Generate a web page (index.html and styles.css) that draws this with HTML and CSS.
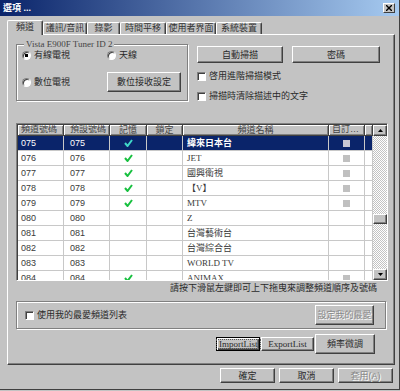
FILE: index.html
```html
<!DOCTYPE html>
<html lang="zh-Hant">
<head>
    <meta charset="UTF-8">
    <title>選項</title>
    <link rel="stylesheet" href="styles.css">
</head>
<body>
<div class="window">
    <div class="titlebar">
        <span>選項 ...</span>
        <span class="close"><svg width="6" height="6" viewBox="0 0 6 6"><path d="M0 0L6 6M6 0L0 6"/></svg></span>
    </div>

    <div class="tabs">
        <div class="tab active">頻道</div>
        <div class="tab">議訊/音訊</div>
        <div class="tab">錄影</div>
        <div class="tab">時間平移</div>
        <div class="tab">使用者界面</div>
        <div class="tab">系統裝置</div>
    </div>

    <div class="panel">
        <div class="top">
            <fieldset class="tuner">
                <legend>Vista E900F Tuner ID 2</legend>
                <div class="tuner-grid">
                    <label class="radio"><span class="dot checked"></span>有線電視</label>
                    <label class="radio"><span class="dot"></span>天線</label>
                    <label class="radio"><span class="dot"></span>數位電視</label>
                    <button class="btn digital">數位接收設定</button>
                </div>
            </fieldset>
            <div class="scan">
                <div class="scan-buttons">
                    <button class="btn auto">自動掃描</button>
                    <button class="btn pwd">密碼</button>
                </div>
                <label class="check"><span class="box"></span>啓用進階掃描模式</label>
                <label class="check"><span class="box"></span>掃描時清除描述中的文字</label>
            </div>
        </div>

        <div class="grid-box">
            <div class="list">
                <div class="row head">
                    <div class="cell">頻道號碼</div>
                    <div class="cell num2">預設號碼</div>
                    <div class="cell center">記憶</div>
                    <div class="cell center">鎖定</div>
                    <div class="cell center">頻道名稱</div>
                    <div class="cell">自訂…</div>
                    <div class="cell"></div>
                </div>
                <div class="row selected">
                    <div class="cell">075</div><div class="cell num2">075</div>
                    <div class="cell center"><svg class="tick" viewBox="0 0 9 8"><path d="M1 4l2.5 3L8 1"/></svg></div>
                    <div class="cell"></div>
                    <div class="cell name bold">緯來日本台</div>
                    <div class="cell center"><span class="mark"></span></div>
                    <div class="cell"></div>
                </div>
                <div class="row">
                    <div class="cell">076</div><div class="cell num2">076</div>
                    <div class="cell center"><svg class="tick" viewBox="0 0 9 8"><path d="M1 4l2.5 3L8 1"/></svg></div>
                    <div class="cell"></div>
                    <div class="cell name">JET</div>
                    <div class="cell center"><span class="mark"></span></div>
                    <div class="cell"></div>
                </div>
                <div class="row">
                    <div class="cell">077</div><div class="cell num2">077</div>
                    <div class="cell center"><svg class="tick" viewBox="0 0 9 8"><path d="M1 4l2.5 3L8 1"/></svg></div>
                    <div class="cell"></div>
                    <div class="cell name">國興衛視</div>
                    <div class="cell center"><span class="mark"></span></div>
                    <div class="cell"></div>
                </div>
                <div class="row">
                    <div class="cell">078</div><div class="cell num2">078</div>
                    <div class="cell center"><svg class="tick" viewBox="0 0 9 8"><path d="M1 4l2.5 3L8 1"/></svg></div>
                    <div class="cell"></div>
                    <div class="cell name">【V】</div>
                    <div class="cell center"><span class="mark"></span></div>
                    <div class="cell"></div>
                </div>
                <div class="row">
                    <div class="cell">079</div><div class="cell num2">079</div>
                    <div class="cell center"><svg class="tick" viewBox="0 0 9 8"><path d="M1 4l2.5 3L8 1"/></svg></div>
                    <div class="cell"></div>
                    <div class="cell name">MTV</div>
                    <div class="cell center"><span class="mark"></span></div>
                    <div class="cell"></div>
                </div>
                <div class="row">
                    <div class="cell">080</div><div class="cell num2">080</div>
                    <div class="cell"></div><div class="cell"></div>
                    <div class="cell name">Z</div>
                    <div class="cell"></div><div class="cell"></div>
                </div>
                <div class="row">
                    <div class="cell">081</div><div class="cell num2">081</div>
                    <div class="cell"></div><div class="cell"></div>
                    <div class="cell name">台灣藝術台</div>
                    <div class="cell"></div><div class="cell"></div>
                </div>
                <div class="row">
                    <div class="cell">082</div><div class="cell num2">082</div>
                    <div class="cell"></div><div class="cell"></div>
                    <div class="cell name">台灣綜合台</div>
                    <div class="cell"></div><div class="cell"></div>
                </div>
                <div class="row">
                    <div class="cell">083</div><div class="cell num2">083</div>
                    <div class="cell"></div><div class="cell"></div>
                    <div class="cell name">WORLD TV</div>
                    <div class="cell"></div><div class="cell"></div>
                </div>
                <div class="row">
                    <div class="cell">084</div><div class="cell num2">084</div>
                    <div class="cell center"><svg class="tick" viewBox="0 0 9 8"><path d="M1 4l2.5 3L8 1"/></svg></div>
                    <div class="cell"></div>
                    <div class="cell name">ANIMAX</div>
                    <div class="cell center"><span class="mark"></span></div>
                    <div class="cell"></div>
                </div>
            </div>
            <div class="scrollbar">
                <div class="arrow"><svg width="5" height="3" viewBox="0 0 5 3"><path d="M2.5 0L5 3H0z"/></svg></div>
                <div class="track"><div class="thumb"></div></div>
                <div class="arrow"><svg width="5" height="3" viewBox="0 0 5 3"><path d="M0 0H5L2.5 3z"/></svg></div>
            </div>
        </div>

        <p class="hint">請按下滑鼠左鍵即可上下拖曳來調整頻道順序及號碼</p>

        <div class="fav">
            <label class="check"><span class="box"></span>使用我的最愛頻道列表</label>
            <button class="btn fav-btn" disabled>設定我的最愛</button>
        </div>

        <div class="list-buttons">
            <button class="btn default import"><span class="focus">ImportList</span></button>
            <button class="btn export">ExportList</button>
            <button class="btn tune">頻率微調</button>
        </div>
    </div>

    <div class="actions">
        <button class="btn">確定</button>
        <button class="btn">取消</button>
        <button class="btn" disabled>套用(A)</button>
    </div>
</div>
</body>
</html>
```

FILE: styles.css
```css
* {
    box-sizing: border-box;
}
body {
    margin: 0;
    background: #c3c3c3;
    font-family: "Liberation Sans", "Noto Sans CJK TC", sans-serif;
    font-size: 9px;
    color: #2a2a2a;
}
.window {
    width: 400px;
    height: 390px;
    display: flex;
    flex-direction: column;
    border-right: 1px solid #404040;
    border-bottom: 1px solid #404040;
}

/* title bar */
.titlebar {
    height: 16px;
    display: flex;
    align-items: center;
    justify-content: space-between;
    padding: 0 4px 0 3px;
    background: linear-gradient(to right, #0a246a, #a6caf0);
    color: #fff;
    font-weight: bold;
    line-height: 10px;
}
.close {
    width: 12px;
    height: 10px;
    display: flex;
    align-items: center;
    justify-content: center;
    background: #c3c3c3;
    border: 1px solid;
    border-color: #fff #404040 #404040 #fff;
}
.close svg path {
    stroke: #000;
    stroke-width: 1.4;
}

/* tabs */
.tabs {
    display: grid;
    grid-template-columns: 36px 44px 33px 46px 50px 46px;
    align-items: end;
    height: 14px;
    margin: 4px 0 0 7px;
}
.tab {
    height: 12px;
    line-height: 11px;
    text-align: center;
    border: 1px solid #fff;
    border-bottom: none;
    border-right-color: #404040;
    border-radius: 2px 2px 0 0;
    box-shadow: inset -1px 0 #808080;
    color: #333;
}
.tab.active {
    height: 15px;
    margin-bottom: -1px;
    z-index: 1;
    background: #c3c3c3;
    line-height: 13px;
}

/* panel */
.panel {
    height: 331px;
    margin: 0 4px 0 7px;
    border: 1px solid #fff;
    border-right-color: #404040;
    border-bottom-color: #404040;
    box-shadow: inset -1px -1px #808080;
    padding: 4px 6px 0 8px;
    display: flex;
    flex-direction: column;
}

/* win buttons */
.btn {
    font: inherit;
    color: #2a2a2a;
    background: #c3c3c3;
    border: 1px solid;
    border-color: #fff #404040 #404040 #fff;
    box-shadow: inset -1px -1px #808080;
    padding: 0;
    line-height: 10px;
}
.btn:disabled {
    color: #8a8a8a;
    text-shadow: 1px 1px #fff;
}
.btn.default {
    border-color: #000;
    box-shadow: inset 1px 1px #fff, inset -1px -1px #404040, inset -2px -2px #808080;
}
.focus {
    display: inline-block;
    padding: 0 2px;
    outline: 1px dotted #555;
    line-height: 8px;
}

/* top section */
.top {
    display: flex;
    gap: 9px;
}
.tuner {
    width: 172px;
    margin: 0;
    padding: 0 5px 6px;
    border: 1px solid #808080;
    box-shadow: inset 1px 1px #fff, 1px 1px #fff;
    min-width: 0;
}
.tuner legend {
    padding: 0 2px;
    margin-left: 2px;
    font: 9px/10px "Liberation Serif", serif;
    color: #444;
    background: #c3c3c3;
}
.tuner-grid {
    display: grid;
    grid-template-columns: 85px auto;
    grid-template-rows: 12px 20px;
    row-gap: 11px;
    align-items: center;
}
.radio, .check {
    display: flex;
    align-items: center;
    gap: 3px;
    line-height: 10px;
}
.dot {
    width: 9px;
    height: 9px;
    border-radius: 50%;
    background: #fff;
    border: 1px solid;
    border-color: #808080 #fff #fff #808080;
    box-shadow: inset 1px 1px #404040;
}
.dot.checked {
    background: radial-gradient(circle, #000 1.5px, #fff 2px);
}
.digital {
    width: 74px;
    height: 20px;
}
.scan {
    display: flex;
    flex-direction: column;
    padding-top: 7px;
}
.scan-buttons {
    display: flex;
    gap: 9px;
    margin-bottom: 8px;
}
.auto {
    width: 86px;
    height: 17px;
}
.pwd {
    width: 88px;
    height: 17px;
}
.scan .check + .check {
    margin-top: 10px;
}
.box {
    width: 9px;
    height: 9px;
    background: #fff;
    border: 1px solid;
    border-color: #808080 #fff #fff #808080;
    box-shadow: inset 1px 1px #404040;
}

/* channel list */
.grid-box {
    margin-top: 22px;
    height: 158px;
    display: flex;
    border: 1px solid;
    border-color: #808080 #fff #fff #808080;
    box-shadow: inset 1px 1px #404040;
    padding: 1px 0 0 1px;
}
.list {
    flex: 1;
    background: #fff;
    overflow: hidden;
}
.row {
    display: grid;
    grid-template-columns: 46px 46px 37px 36px 146px 36px 1fr;
    height: 15px;
    color: #3a3a3a;
}
.cell {
    border-right: 1px solid #c8c8c8;
    border-bottom: 1px solid #c8c8c8;
    padding-left: 3px;
    line-height: 14px;
    white-space: nowrap;
    overflow: hidden;
}
.cell.num2 {
    padding-left: 6px;
}
.cell.center {
    padding-left: 0;
    display: flex;
    align-items: center;
    justify-content: center;
}
.cell.name {
    padding-left: 4px;
    font-family: "Liberation Serif", "Noto Sans CJK TC", serif;
}
.row.head {
    height: 11px;
}
.head .cell {
    background: #c3c3c3;
    color: #444;
    line-height: 9px;
    border-right-color: #404040;
    border-bottom-color: #404040;
    box-shadow: inset 1px 1px #fff, inset -1px -1px #808080;
}
.row.selected {
    background: #0a246a;
    color: #fff;
}
.bold {
    font-weight: bold;
}
.tick {
    width: 9px;
    height: 8px;
    fill: none;
    stroke: #18c040;
    stroke-width: 2;
}
.selected .tick {
    stroke: #40d8c8;
}
.mark {
    width: 7px;
    height: 7px;
    background: #c0c0c0;
}
.selected .mark {
    background: #c8c8d4;
}

/* scrollbar */
.scrollbar {
    width: 14px;
    display: flex;
    flex-direction: column;
}
.arrow {
    height: 11px;
    display: flex;
    align-items: center;
    justify-content: center;
    background: #c3c3c3;
    border: 1px solid;
    border-color: #fff #404040 #404040 #fff;
    box-shadow: inset -1px -1px #808080;
}
.track {
    flex: 1;
    background: repeating-conic-gradient(#c3c3c3 0 25%, #fff 0 50%) 0 0 / 2px 2px;
}
.thumb {
    height: 10px;
    margin-top: 78px;
    background: #c3c3c3;
    border: 1px solid;
    border-color: #fff #404040 #404040 #fff;
    box-shadow: inset -1px -1px #808080;
}

/* bottom part */
.hint {
    margin: 2px 11px 0 0;
    text-align: right;
    line-height: 10px;
}
.fav {
    margin: 8px 2px 0 0;
    height: 28px;
    display: flex;
    align-items: center;
    justify-content: space-between;
    padding: 0 11px 0 8px;
    border: 1px solid #808080;
    box-shadow: inset 1px 1px #fff, 1px 1px #fff;
}
.fav-btn {
    width: 59px;
    height: 20px;
}
.list-buttons {
    display: flex;
    justify-content: flex-end;
    align-items: center;
    gap: 1px;
    margin: 5px 13px 0 0;
}
.import, .export {
    height: 14px;
    font-family: "Liberation Serif", serif;
}
.import {
    width: 44px;
}
.export {
    width: 53px;
}
.tune {
    width: 60px;
    height: 20px;
}

/* dialog buttons */
.actions {
    display: flex;
    justify-content: flex-end;
    gap: 4px;
    margin: 3px 6px 0 0;
}
.actions .btn {
    width: 55px;
    height: 15px;
}
```
